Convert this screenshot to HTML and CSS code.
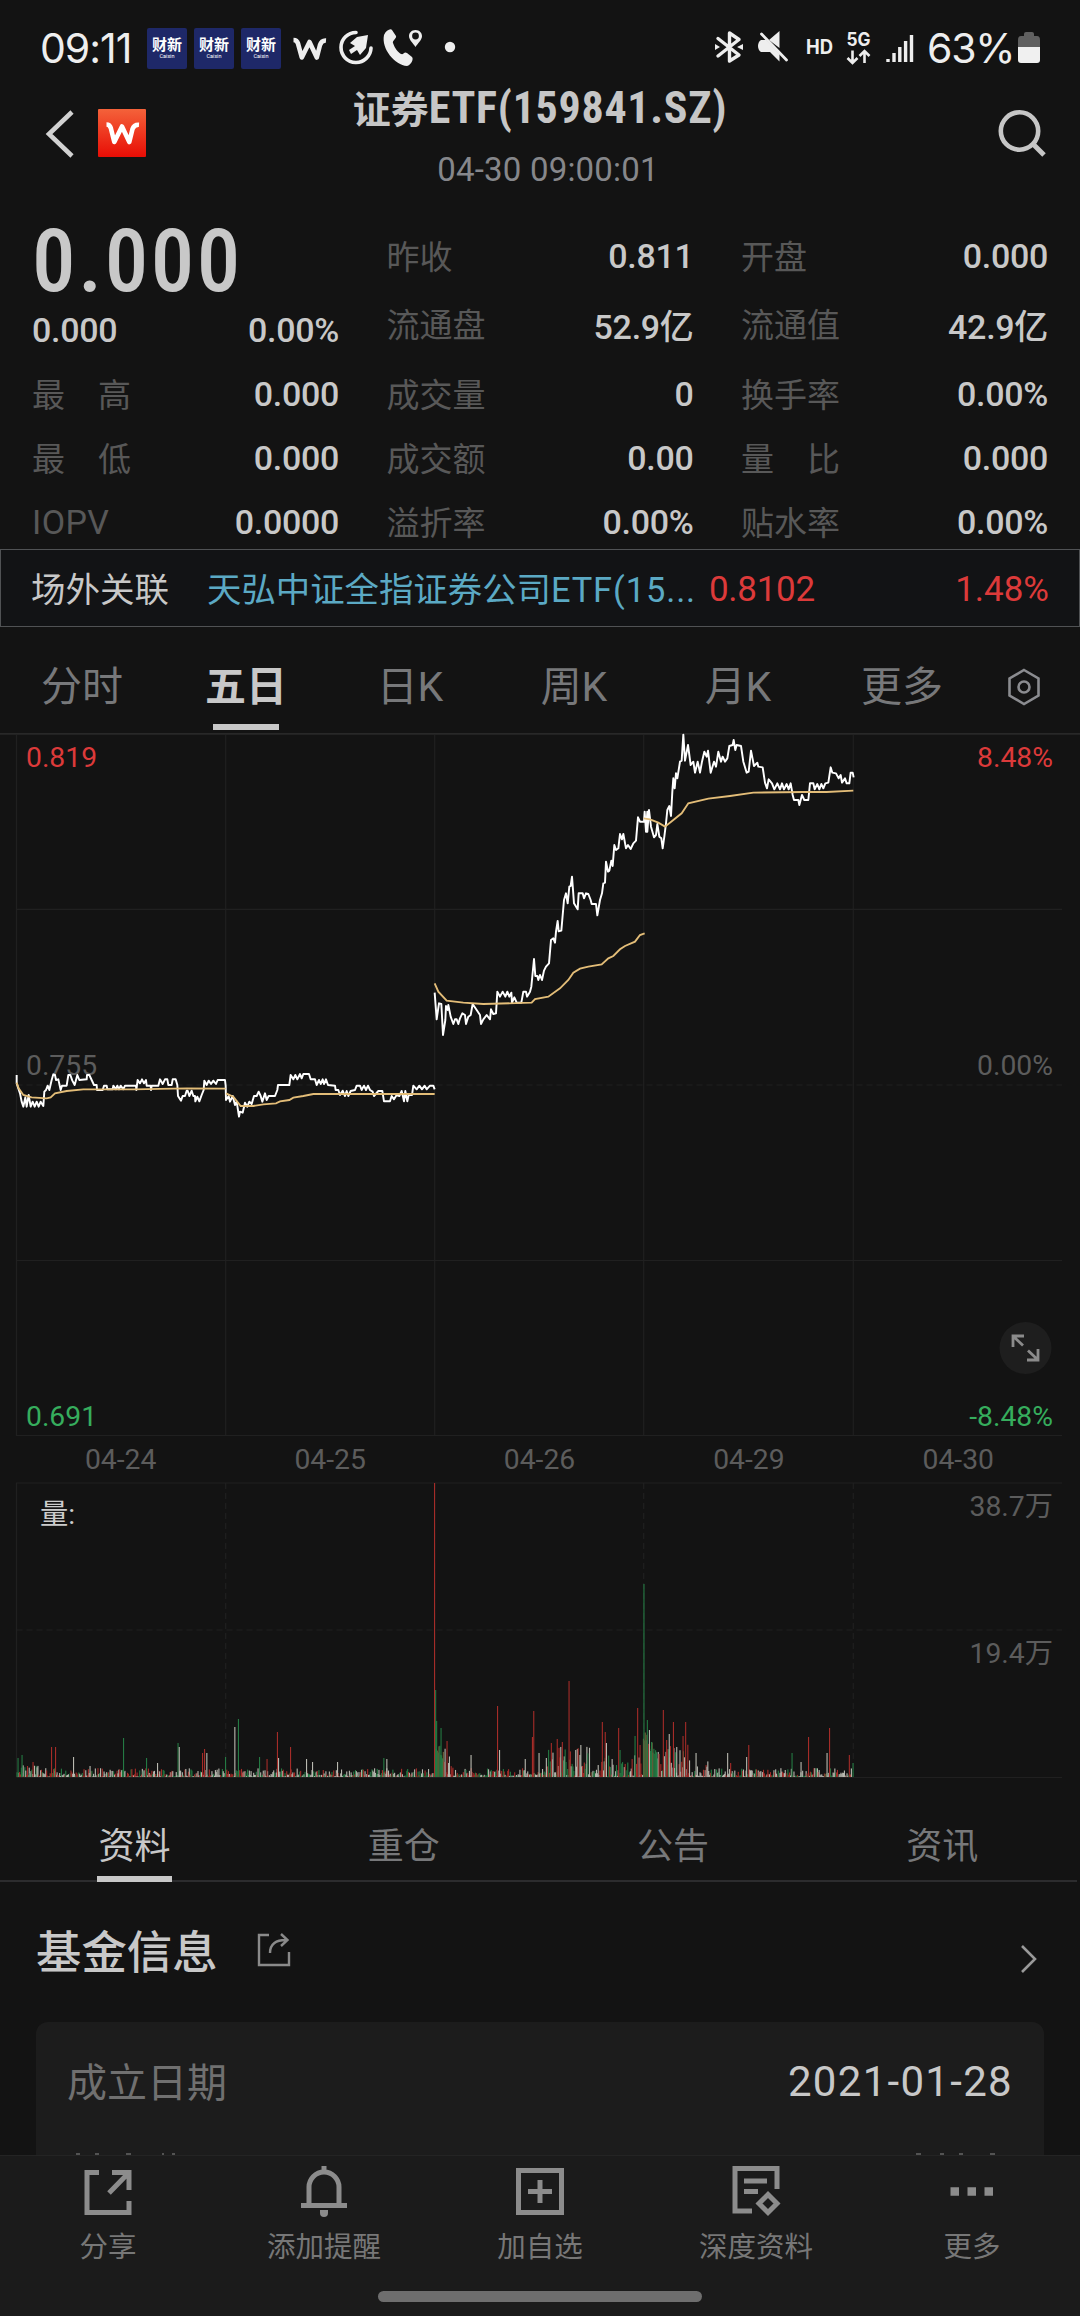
FILE: index.html
```html
<!DOCTYPE html>
<html lang="zh-CN">
<head>
<meta charset="utf-8">
<title>证券ETF(159841.SZ)</title>
<link rel="stylesheet" href="styles.css">
</head>
<body>
<div class="screen">
  <div class="status">
    <span class="clock">09:11</span>
    <div class="notif">
      <span class="caixin"><b>财新</b><i>Caixin</i></span>
      <span class="caixin"><b>财新</b><i>Caixin</i></span>
      <span class="caixin"><b>财新</b><i>Caixin</i></span>
    </div>
    <svg class="status-left" width="170" height="44" viewBox="290 27 170 44">
      <path d="M293.500 41Q297 41 298 44.500L301.800 58.500L309.500 43L316.800 58.500L320 46Q321.500 41.200 326 41.500" fill="none" stroke="#eee" stroke-width="4.600" stroke-linejoin="round"/>
      <path d="M356 33.500A15 15 0 1 0 371 49" fill="none" stroke="#eee" stroke-width="3.600" stroke-linecap="round"/>
      <path d="M368 36L366 49L360 56L357 51L351 55L349 51L355 47L350 44L357 38Z" fill="#eee"/>
      <path d="M384 36C386 31 391 29 392 31L396 37C397 39 392 42 393 44C395 50 398 53 401 55C404 56 404 52 407 54L412 58C414 60 411 66 407 67C395 66 381 50 384 36Z" fill="#eee"/>
      <path d="M415.500 31C411.500 31 409 34 409 37C409 41 413 44 415.500 48C418 44 422 41 422 37C422 34 419.500 31 415.500 31Z" fill="#eee"/>
      <circle cx="415.500" cy="37" r="3.400" fill="#131313"/>
      <circle cx="450" cy="48" r="5.200" fill="#eee"/>
    </svg>
    <svg class="status-right" width="215" height="44" viewBox="710 27 215 44" fill="none" stroke="#eee">
      <path d="M718 39.500L739 56L729.500 62V34L739 40.500L718 57" stroke-width="3.400" stroke-linejoin="round" stroke-linecap="round"/>
      <path d="M715 45L720 48L715 51ZM743 45L737 48L743 51Z" fill="#eee" stroke="none"/>
      <path d="M779.500 32V49L769 41ZM761 41H766L779.500 55V62.500L770 53H761C757 51 757 43 761 41Z" fill="#eee" stroke="none"/>
      <path d="M761.500 35L786.500 61" stroke-width="2.800" stroke-linecap="round"/>
      <text x="806" y="54.500" class="tiny" font-size="20" textLength="27" lengthAdjust="spacingAndGlyphs">HD</text>
      <text x="846.500" y="46.500" class="tiny" font-size="18.500" textLength="24" lengthAdjust="spacingAndGlyphs">5G</text>
      <path d="M852.500 51.500V64M847.500 59L852.500 64L857.500 59M864.500 64V52M859.500 57L864.500 52L869.500 57" stroke-width="2.600"/>
      <path d="M888 60V63M894 54V63M899.800 48V63M905.600 42V63M911.500 36V63" stroke-width="3.400"/>
    </svg>
    <span class="percent">63%</span>
    <svg class="battery" width="22" height="32" viewBox="0 0 22 32">
      <path d="M6 2Q6 0 8 0H14Q16 0 16 2V4H19Q22 4 22 8V16H0V8Q0 4 3 4H6Z" fill="#606060"/>
      <path d="M0 15H22V28Q22 31 19 31H3Q0 31 0 28Z" fill="#f0f0f0"/>
    </svg>
  </div>

  <header class="header">
    <div class="header-left">
      <svg width="32" height="50" viewBox="44 109 32 50"><path d="M72 112L49 134L72 156" fill="none" stroke="#d2d2d2" stroke-width="4.600"/></svg>
      <svg width="48" height="48" viewBox="0 0 48 48">
        <defs><linearGradient id="logo" x2="0" y2="1"><stop stop-color="#f4623a"/><stop offset="1" stop-color="#e80d05"/></linearGradient></defs>
        <rect width="48" height="48" rx="1" fill="url(#logo)"/>
        <path d="M8.500 15.500Q11.800 15.500 12.800 19L16.300 33L24 17.500L31.300 33L34.500 20Q36 15.500 41 15.800" fill="none" stroke="#fff" stroke-width="4.600" stroke-linejoin="round"/>
      </svg>
    </div>
    <div class="header-title">
      <h1>证券<span class="latin">ETF(159841.SZ)</span></h1>
      <p>04-30 09:00:01</p>
    </div>
    <svg class="search" width="52" height="52" viewBox="996 108 52 52" fill="none" stroke="#c6c6c6">
      <circle cx="1019.500" cy="131" r="18.700" stroke-width="4.600"/><path d="M1033 144L1044 155" stroke-width="5"/>
    </svg>
  </header>

  <section class="quote">
    <div class="col">
      <div class="price">0.000</div>
      <div class="row change"><b>0.000</b><b>0.00%</b></div>
      <div class="row"><span>最　高</span><b>0.000</b></div>
      <div class="row"><span>最　低</span><b>0.000</b></div>
      <div class="row"><span class="iopv">IOPV</span><b>0.0000</b></div>
    </div>
    <div class="col">
      <div class="row r1"><span>昨收</span><b>0.811</b></div>
      <div class="row r2"><span>流通盘</span><b>52.9亿</b></div>
      <div class="row"><span>成交量</span><b>0</b></div>
      <div class="row"><span>成交额</span><b>0.00</b></div>
      <div class="row"><span>溢折率</span><b>0.00%</b></div>
    </div>
    <div class="col">
      <div class="row r1"><span>开盘</span><b>0.000</b></div>
      <div class="row r2"><span>流通值</span><b>42.9亿</b></div>
      <div class="row"><span>换手率</span><b>0.00%</b></div>
      <div class="row"><span>量　比</span><b>0.000</b></div>
      <div class="row"><span>贴水率</span><b>0.00%</b></div>
    </div>
  </section>

  <section class="related">
    <span class="related-label">场外关联</span>
    <span class="related-name">天弘中证全指证券公司<i>ETF(15...</i></span>
    <span class="related-price">0.8102</span>
    <span class="related-pct">1.48%</span>
  </section>

  <nav class="periods">
    <span>分时</span><span class="active">五日</span><span>日K</span><span>周K</span><span>月K</span><span>更多</span>
    <svg width="36" height="40" viewBox="0 0 36 40" fill="none" stroke="#8b8c90" stroke-width="2.600"><path d="M18 3L32.500 11.500V28.500L18 37L3.500 28.500V11.500Z"/><circle cx="18" cy="20" r="5.500"/></svg>
  </nav>

  <svg class="price-chart" width="1080" height="703" viewBox="0 733 1080 703">
    <path d="M0 733.700H1080" stroke="#282828" stroke-width="2"/>
    <path d="M16.500 735V1435.500H1062M225.700 735V1435M434.700 735V1435M643.700 735V1435M853.300 735V1435M16.500 909.300H1062M16.500 1260.500H1062" class="grid"/>
    <path d="M16.500 1085H1062" class="grid dash"/>
    <text x="26" y="766.500" class="up">0.819</text>
    <text x="1053" y="766.500" class="up end">8.48%</text>
    <text x="26" y="1074.500" class="flat">0.755</text>
    <text x="1053" y="1074.500" class="flat end">0.00%</text>
    <text x="26" y="1425.500" class="down">0.691</text>
    <text x="1053" y="1425.500" class="down end">-8.48%</text>
    <g transform="translate(0 960) scale(.33333)">
      <polyline class="line" points="50,345 50,370 55,385 60,400 65,425 70,440 76,412 80,440 86,405 92,440 98,425 104,440 110,425 116,440 122,425 130,438 133,395 138,390 143,377 148,390 155,360 160,343 165,345 168,360 175,358 182,390 186,377 200,377 205,345 211,345 217,362 224,375 232,345 238,360 260,358 261,345 268,345 275,360 282,375 290,375 291,390 308,390 312,377 320,377 322,388 338,388 340,377 348,388 352,377 357,388 362,377 370,388 375,377 408,377 409,390 413,360 420,370 426,358 432,370 438,360 440,377 452,377 453,390 455,377 475,377 480,358 488,372 495,358 502,358 505,375 515,375 518,358 527,358 532,375 534,408 543,422 548,408 555,408 560,392 563,392 568,408 575,392 580,408 585,408 586,424 592,410 598,424 605,405 611,390 613,362 620,375 626,362 633,372 640,362 648,372 653,360 675,360 677,377 678,420 686,408 690,425 698,408 705,435 710,425 717,470 720,455 728,458 735,428 742,440 748,425 755,432 762,408 770,408 776,395 782,408 787,425 795,400 800,420 806,408 825,408 832,390 834,375 868,375 872,345 880,358 886,345 892,358 900,342 905,355 910,342 927,342 932,358 945,358 950,375 957,360 962,372 968,358 972,372 978,358 984,375 1005,377 1007,390 1015,390 1020,405 1028,392 1035,408 1040,393 1045,408 1052,393 1065,390 1070,377 1080,377 1085,390 1092,377 1098,390 1104,377 1110,390 1118,395 1122,408 1135,393 1147,393 1152,424 1170,424 1175,408 1182,418 1190,405 1198,408 1205,393 1212,424 1216,393 1222,424 1226,405 1236,405 1240,377 1250,388 1258,377 1266,388 1274,377 1280,388 1290,377 1300,377 1304,388"/>
      <polyline class="avg" points="50,368 56,385 70,405 95,412 140,415 152,412 165,400 200,393 250,388 400,388 560,385 677,386"/>
      <polyline class="avg" points="678,400 700,410 722,438 760,438 790,433 828,430 840,424 868,420 880,413 910,408 940,402 1000,402 1304,402"/>
    </g>
    <g transform="translate(420 720) scale(.33333)">
      <polyline class="line" points="44,818 50,898 57,850 64,852 69,945 76,900 78,858 83,870 85,855 92,890 100,912 105,898 110,898 115,912 120,895 127,880 135,885 138,912 145,890 152,885 158,852 170,870 180,885 183,912 190,898 200,885 210,898 213,868 220,882 228,880 232,815 240,830 248,815 256,830 262,815 268,830 274,818 276,848 283,832 290,848 304,848 310,815 318,815 321,830 330,815 334,800 342,717 346,768 352,768 355,780 360,765 366,780 372,752 378,740 387,730 393,660 400,655 405,668 408,635 413,603 416,634 424,632 432,540 438,520 443,550 448,500 452,498 456,470 462,550 473,568 476,520 488,520 492,535 498,520 505,522 512,540 515,552 528,552 532,586 540,540 546,520 550,490 555,488 558,425 564,455 568,452 574,422 578,438 583,375 588,390 595,385 600,342 606,358 610,342 618,385 624,375 632,387 640,370 648,362 654,292 660,305 672,305 674,275 678,335 682,275 682,335 687,270 693,320 702,352 708,345 712,312 718,350 724,355 728,385 733,350 738,310 742,270 748,258 753,288 757,215 760,175 764,205 768,160 772,175 780,125 785,122 790,44 795,122 804,75 812,135 820,125 825,158 833,125 840,158 846,125 853,95 860,110 864,92 872,158 882,125 888,140 895,95 903,125 908,110 915,125 922,115 928,78 938,75 941,60 946,90 950,75 963,78 970,125 980,158 986,155 993,92 1002,138 1012,128 1015,140 1028,142 1035,188 1041,205 1046,178 1056,190 1063,208 1072,190 1080,208 1086,190 1092,208 1100,192 1106,208 1112,190 1118,225 1122,240 1135,240 1138,255 1146,225 1153,240 1165,240 1170,190 1180,190 1184,208 1192,192 1198,208 1204,192 1210,205 1216,190 1225,188 1232,142 1237,158 1248,160 1256,175 1262,165 1266,188 1275,175 1280,190 1288,190 1292,158 1298,158 1301,172"/>
      <polyline class="avg" points="44,790 55,815 80,842 130,848 190,852 335,848 345,837 385,830 420,805 445,780 460,758 480,746 505,740 545,733 565,715 580,708 600,688 615,678 645,665 660,645 674,640"/>
      <polyline class="avg" points="671,295 690,298 715,308 735,320 760,300 785,280 805,250 865,236 930,228 1000,218 1150,216 1220,216 1300,212"/>
    </g>
    <circle cx="1025.500" cy="1348" r="26" fill="#1e1e1e"/>
    <path d="M1013 1347V1336H1024M1014 1337L1023 1345.500M1038 1349V1360H1027M1037 1359L1028 1350.500" fill="none" stroke="#8b8b8b" stroke-width="2.800"/>
  </svg>

  <div class="dates"><span>04-24</span><span>04-25</span><span>04-26</span><span>04-29</span><span>04-30</span></div>

  <svg class="volume-chart" width="1080" height="300" viewBox="0 1482 1080 300">
    <path d="M16.500 1777V1483H1062M16.500 1777.500H1062" class="grid"/>
    <path d="M16.500 1630H1062M225.700 1483V1777M434.700 1483V1777M643.700 1483V1777M853.300 1483V1777" class="grid dash"/>
    <g id="bars"></g>
    <text x="40" y="1524" class="vol">量:</text>
    <text x="1053" y="1516" class="flat end">38.7万</text>
    <text x="1053" y="1662.500" class="flat end">19.4万</text>
  </svg>

  <nav class="tabs"><span class="active">资料</span><span>重仓</span><span>公告</span><span>资讯</span></nav>

  <section class="fund">
    <div class="fund-head">
      <h2>基金信息</h2>
      <svg class="jump" width="36" height="36" viewBox="0 0 36 36" fill="none" stroke="#8a8a8a" stroke-width="2.400"><path d="M13 3H3V33H33V20"/><path d="M14 21C14 12 20 7.500 31 8M25 2L31.500 8L25 14"/></svg>
      <svg class="chevron" width="20" height="32" viewBox="0 0 20 32" fill="none" stroke="#999" stroke-width="2.600"><path d="M4 3L17 16L4 29"/></svg>
    </div>
    <div class="card">
      <div class="card-row"><span>成立日期</span><b>2021-01-28</b></div>
      <svg class="next-row" width="1008" height="2" viewBox="36 0 1008 2"><path d="M76 1H80M95 1H99M126 1H131M162 1H164M172 1H175M916 1H921M940 1H944M959 1H963M990 1H995" stroke="#666" stroke-width="1.500"/></svg>
    </div>
  </section>

  <footer class="toolbar">
    <div class="tool"><svg width="56" height="56" viewBox="80 2164 56 56"><path d="M99 2172.500H87V2212.500H129V2201M112 2172.500H129V2190M129 2172.500L109 2193" /></svg><span>分享</span></div>
    <div class="tool"><svg width="56" height="56" viewBox="297 2164 56 56"><path d="M310 2205V2187A15 15 0 0 1 340 2187V2205M302 2205.500H348M325 2166V2173"/><path d="M321 2210H329V2213A4 4 0 0 1 321 2213Z" fill="#8c8c8c" stroke="none"/></svg><span>添加提醒</span></div>
    <div class="tool"><svg width="56" height="56" viewBox="512 2164 56 56"><path d="M518.500 2170.500H561.500V2212.500H518.500ZM528 2191.500H552M540 2180V2203"/></svg><span>加自选</span></div>
    <div class="tool"><svg width="56" height="56" viewBox="728 2164 56 56"><path d="M777 2189V2168.500H735V2211H752M744 2181H767M744 2191.500H758"/><path d="M768 2194.500L777 2203.500L768 2212.500L759 2203.500Z"/></svg><span>深度资料</span></div>
    <div class="tool"><svg width="56" height="56" viewBox="944 2164 56 56"><path d="M950.500 2191.500H959M967.500 2191.500H976M984.500 2191.500H993" class="dots"/></svg><span>更多</span></div>
    <i class="home"></i>
  </footer>
</div>
<script src="script.js"></script>
</body>
</html>
```
FILE: styles.css
```css
* { box-sizing: border-box; margin: 0; padding: 0; }
body { background: #131313; font-family: Roboto, "Noto Sans CJK SC", sans-serif; color: #c8c8c8; }
b, i { font-weight: inherit; font-style: normal; }
svg { display: block; flex: none; }
.screen { width: 1080px; height: 2316px; display: flex; flex-direction: column; overflow: hidden; background: #131313; }
.screen > * { flex: none; }

.status { height: 88px; padding: 8px 40px 0 40px; display: flex; align-items: center; color: #eee; }
.clock, .percent { font-family: Inter, sans-serif; font-size: 41px; font-weight: 400; line-height: 48px; white-space: nowrap; }
.clock { width: 107px; letter-spacing: -1px; }
.notif { display: flex; gap: 7px; width: 143px; }
.caixin { width: 40px; height: 41px; border-radius: 2px; background: #1e2868; color: #fff; display: flex; flex-direction: column; align-items: center; padding-top: 9px; }
.caixin b { font-size: 15px; line-height: 16px; font-weight: 700; }
.caixin i { font-size: 5.500px; line-height: 6px; }
.status-right { margin-left: 250px; }
.tiny { font-family: Inter, sans-serif; font-weight: 700; fill: #eee; stroke: none; }
.percent { width: 93px; letter-spacing: -1.2px; padding-left: 2px; }

.header { height: 124px; display: flex; justify-content: space-between; padding: 0 32px 0 44px; }
.header-left { width: 220px; display: flex; gap: 22px; padding-top: 21px; }
.header-title { display: flex; flex-direction: column; align-items: center; text-align: center; }
.header h1 { margin-left: -12px; font-size: 38px; line-height: 40px; font-weight: 700; white-space: nowrap; color: #c6c6c6; }
.latin { font-size: 44px; font-stretch: 75%; letter-spacing: .7px; }
.header p { margin-top: 20px; padding-left: 4px; font-size: 33px; line-height: 40px; letter-spacing: .2px; color: #86878b; }
.search { margin: 20px 0 0 168px; }

.quote { height: 337px; display: grid; grid-template-columns: 306px 306px 306px; gap: 48.500px; padding: 10px 0 0 32px; }
.price { height: 78px; font-size: 87px; line-height: 78px; font-weight: 500; font-stretch: 75%; letter-spacing: 2.500px; }
.row { height: 64.400px; display: flex; align-items: center; justify-content: space-between; font-size: 34px; white-space: nowrap; }
.row b { font-weight: 500; letter-spacing: -.3px; margin-right: -1px; }
.row span { font-size: 33px; color: #585858; padding-bottom: 2px; }
.row .iopv { font-size: 34px; letter-spacing: .4px; padding-bottom: 0; }
.change { height: 61.500px; padding-bottom: 2px; }
.r1 { height: 68px; }
.r2 { height: 68px; margin-bottom: 3.500px; }

.related { height: 78px; border: 1.500px solid #505254; background: #121315; display: flex; align-items: center; padding: 0 30px; font-size: 35px; white-space: nowrap; }
.related-label { width: 176px; font-size: 34.500px; padding-bottom: 2px; }
.related-name { width: 502px; font-size: 34.400px; color: #5ba9c4; padding-bottom: 2px; }
.related-name i { letter-spacing: .9px; }
.related-price { color: #dc3a3a; letter-spacing: -.3px; padding-top: 2px; }
.related-pct { color: #dc3a3a; margin-left: auto; padding-top: 2px; }

.periods { height: 106px; padding-top: 14px; display: grid; grid-template-columns: repeat(6, 164px) 80px; align-items: center; justify-items: center; color: #77787a; font-size: 41px; }
.periods > * { position: relative; line-height: 60px; }
.periods .active { color: #c8c8c8; font-weight: 700; }
.periods .active::after { content: ""; position: absolute; left: 8px; right: 8px; bottom: -13px; height: 6px; background: #c8c8c8; }

.grid { fill: none; stroke: #202020; stroke-width: 1.200; }
.dash { stroke-dasharray: 6 4; }
.line { fill: none; stroke: #fff; stroke-width: 5.800; stroke-linejoin: round; }
.avg { fill: none; stroke: #e3bd78; stroke-width: 5.600; }
.price-chart text, .volume-chart text { font-size: 28.300px; }
.up { fill: #dc3a3a; }
.down { fill: #36ad5d; }
.flat { fill: #5c5c5c; }
.end { text-anchor: end; }
.vol { fill: #ccc; }

.dates { height: 46px; padding: 0 17px 0 16px; display: grid; grid-template-columns: repeat(5, 1fr); align-items: center; justify-items: center; font-size: 28.300px; color: #5c5c5c; }

.tabs { width: 1077px; height: 100px; display: grid; grid-template-columns: repeat(4, 1fr); justify-items: center; font-size: 36px; color: #77787a; border-bottom: 2px solid #2c2c2e; }
.tabs span { position: relative; line-height: 54px; height: 54px; margin-top: 38px; }
.tabs .active { color: #c8c8c8; }
.tabs .active::after { content: ""; position: absolute; left: -2px; right: -1px; bottom: -8px; height: 6px; background: #c8c8c8; }

.fund { height: 273px; display: flex; flex-direction: column; }
.fund-head { height: 140px; display: flex; align-items: center; padding: 2px 42px 0 36px; }
.fund-head h2 { font-size: 45.400px; font-weight: 500; line-height: 60px; margin: 1px 38px 0 0; }
.jump { margin-bottom: 6px; }
.chevron { margin: 12px 0 0 auto; }
.card { flex: 1; margin: 0 36px; background: #1c1c1c; border-radius: 12px 12px 0 0; display: flex; flex-direction: column; justify-content: space-between; }
.card-row { height: 119px; padding: 0 31px; display: flex; justify-content: space-between; align-items: center; font-size: 40px; color: #707070; }
.card-row span { padding-bottom: 4px; }
.card-row b { font-size: 42px; letter-spacing: 1.300px; color: #c8c8c8; }

.toolbar { height: 162px; padding-top: 8px; background: #1b1b1b; border-top: 1.500px solid #242424; display: grid; grid-template-columns: repeat(5, 1fr); grid-template-rows: 127px 12px; justify-items: center; }
.tool { display: flex; flex-direction: column; align-items: center; font-size: 28.500px; line-height: 36px; color: #777; }
.tool span { margin-top: 10px; }
.tool svg { fill: none; stroke: #8c8c8c; stroke-width: 5; }
.tool .dots { stroke-width: 8.500; }
.home { grid-column: 1 / -1; width: 324px; height: 11px; border-radius: 6px; background: #6e6e6e; }
```
FILE: script.js
```js
// Notable volume bars: [x, top y, colour key]
const spikes = [
  [18, 1758, 'g'], [22, 1755, 'g'], [33, 1762, 'r'], [51.5, 1747, 'r'], [55.5, 1747, 'r'], [73.5, 1757, 'w'],
  [90, 1766, 'w'], [123.5, 1738, 'g'], [146.5, 1758, 'g'], [157.5, 1763, 'w'], [178, 1743, 'g'], [179.2, 1747, 'w'],
  [202.5, 1753, 'r'], [204.5, 1749, 'r'], [206.8, 1753, 'w'], [225.5, 1757, 'g'], [234.8, 1727, 'w'], [238.4, 1719, 'g'],
  [259.5, 1757, 'g'], [267, 1759, 'r'], [277.4, 1732, 'r'], [278.5, 1758, 'w'], [290.5, 1747, 'r'], [306.5, 1759, 'w'],
  [312.5, 1762, 'w'], [337.5, 1762, 'w'], [383.8, 1758, 'g'], [386.8, 1759, 'w'], [434.5, 1483, 'r'], [435.6, 1690, 'g'],
  [436.6, 1721, 'g'], [441, 1728, 'g'], [447, 1741, 'r'], [471, 1755, 'w'], [497.5, 1706, 'r'], [499.5, 1750, 'w'],
  [525.2, 1759, 'w'], [532.4, 1737, 'r'], [533.7, 1711, 'r'], [539, 1753, 'w'], [546.3, 1758, 'w'], [551.3, 1743, 'r'],
  [557.2, 1739, 'r'], [562.3, 1742, 'r'], [569, 1681, 'r'], [575.7, 1750, 'w'], [580.8, 1745, 'w'], [602.3, 1722, 'r'],
  [605.2, 1732, 'r'], [606.4, 1743, 'w'], [618.6, 1728, 'r'], [620, 1750, 'g'], [635, 1736, 'g'], [637.6, 1708, 'r'],
  [640, 1745, 'r'], [643.9, 1584, 'g'], [647.3, 1720, 'g'], [649.4, 1730, 'w'], [651.5, 1742, 'g'], [663.3, 1710, 'r'],
  [666.6, 1740, 'r'], [669.2, 1734, 'w'], [673.4, 1722, 'r'], [676.7, 1747, 'w'], [683, 1736, 'r'], [685.6, 1722, 'r'],
  [696, 1753, 'w'], [727.6, 1753, 'w'], [730.6, 1763, 'r'], [746.6, 1757, 'w'], [748.7, 1745, 'r'], [792, 1753, 'g'],
  [801, 1762, 'w'], [808.5, 1737, 'r'], [827, 1753, 'w'], [829.5, 1728, 'r'], [849.3, 1755, 'r'], [853, 1763, 'g']
];
const colours = { r: '#a52c28', g: '#247a43', w: '#b9b9b0', m: '#74683c' };
const base = 1777;
let seed = 11;
const rand = () => (seed = (seed * 16807) % 2147483647) / 2147483647;

// Typical bar height along the time axis
function level(x) {
  if (x > 434 && x < 454) return 42 - (x - 434) * 1.7;
  if (x > 546 && x < 590) return 20;
  if (x > 595 && x < 643) return 15;
  if (x >= 643 && x < 662) return 54 - (x - 643) * 2;
  if (x >= 662 && x < 688) return 24;
  if (x >= 688 && x < 710) return 11;
  if (x < 40) return 10;
  return 5.5;
}
const group = document.getElementById('bars');
function bar(x, top, colour) {
  const r = document.createElementNS('http://www.w3.org/2000/svg', 'rect');
  r.setAttribute('x', x - 0.5);
  r.setAttribute('y', top);
  r.setAttribute('width', 1.1);
  r.setAttribute('height', base - top);
  r.setAttribute('fill', colour);
  group.append(r);
}
for (let x = 17; x < 852; x += 0.87) {
  const l = level(x), dense = l > 25, k = rand();
  const h = dense ? l * (0.65 + rand() * 0.35) : l * Math.pow(rand(), 1.6) * 1.5 + 0.6;
  const key = dense ? (k < 0.5 ? 'g' : k < 0.85 ? 'm' : 'r') : (k < 0.27 ? 'g' : k < 0.56 ? 'r' : 'w');
  bar(x, base - h, colours[key]);
}
spikes.forEach(s => bar(s[0], s[1], colours[s[2]]));
```
